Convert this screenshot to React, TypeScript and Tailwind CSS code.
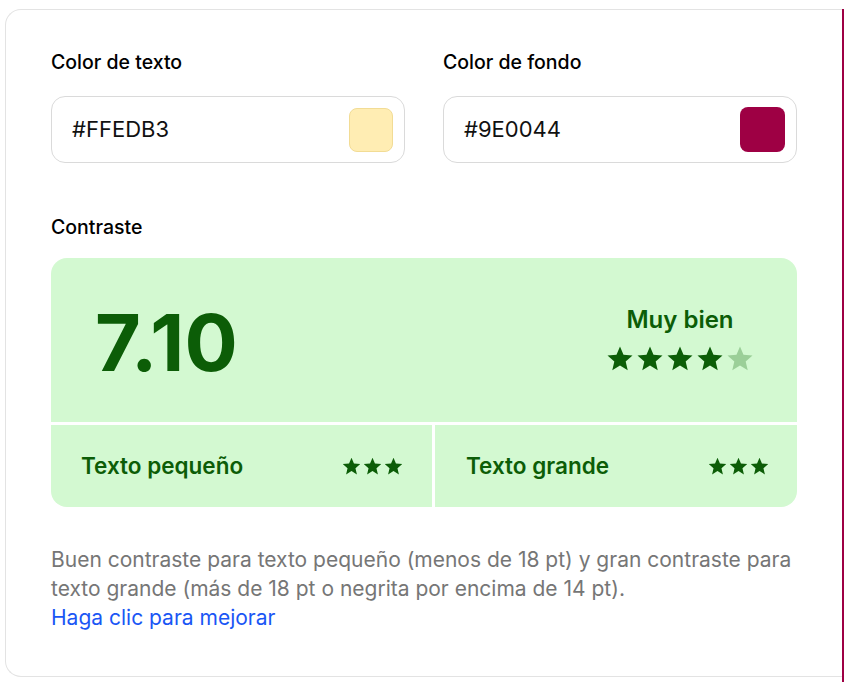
import React from "react";

const STAR = "M12 17.27L18.18 21l-1.64-7.03L22 9.24l-7.19-.61L12 2 9.19 8.63 2 9.24l5.46 4.73L5.82 21z";

function Stars({ total, filled, size }: { total: number; filled: number; size: number }) {
  return (
    <div className="flex items-center">
      {Array.from({ length: total }).map((_, i) => (
        <svg
          key={i}
          width={size}
          height={size}
          viewBox="0 0 24 24"
          className={i < filled ? "fill-[#0c5d07]" : "fill-[#9bcf98]"}
        >
          <path d={STAR} />
        </svg>
      ))}
    </div>
  );
}

function ColorField({ label, value, swatch }: { label: string; value: string; swatch: string }) {
  return (
    <div className="flex flex-col gap-5 w-[354px]">
      <span className="text-[19.5px] leading-7 font-medium text-black">{label}</span>
      <div className="h-[67px] rounded-[14px] border border-[#dadada] bg-white flex items-center justify-between pl-5 pr-[11px]">
        <span className="text-[22px] text-[#111]">{value}</span>
        <div className={swatch} />
      </div>
    </div>
  );
}

export default function App() {
  return (
    <div
      className="flex items-start h-[682px] overflow-hidden bg-white pt-[9px] pl-[5px]"
      style={{ fontFamily: "Inter, 'Noto Sans', sans-serif" }}
    >
      <div className="w-[837px] h-[668px] shrink-0 rounded-l-2xl border border-r-0 border-[#e3e3e3] pl-[45px] pr-[45px] pt-[38px]">
        <div className="flex justify-between">
          <ColorField
            label="Color de texto"
            value="#FFEDB3"
            swatch="w-[44px] h-[44px] rounded-lg bg-[#FFEDB3] border border-[#f2dc95]"
          />
          <ColorField
            label="Color de fondo"
            value="#9E0044"
            swatch="w-[45px] h-[45px] rounded-lg bg-[#9E0044]"
          />
        </div>

        <div className="mt-[50px] text-[19.5px] leading-7 font-medium text-black">Contraste</div>

        <div className="mt-[17px] rounded-2xl overflow-hidden flex flex-col gap-[3px] bg-white">
          <div className="h-[164px] bg-[#d3f9d1] flex items-center justify-between pl-[44px] pr-[42px]">
            <span className="text-[79px] font-bold text-[#0c5d07] leading-none mt-[4px]">7.10</span>
            <div className="flex flex-col items-center gap-[10px]">
              <span className="text-[24px] font-semibold text-[#0c5d07] leading-7">Muy bien</span>
              <Stars total={5} filled={4} size={30} />
            </div>
          </div>
          <div className="flex gap-[3px] h-[82px]">
            <div className="w-[381px] bg-[#d3f9d1] flex items-center justify-between pl-[30px] pr-[28px]">
              <span className="text-[22.5px] font-semibold text-[#0c5d07]">Texto pequeño</span>
              <Stars total={3} filled={3} size={21} />
            </div>
            <div className="flex-1 bg-[#d3f9d1] flex items-center justify-between pl-[31px] pr-[27px]">
              <span className="text-[22.5px] font-semibold text-[#0c5d07]">Texto grande</span>
              <Stars total={3} filled={3} size={21} />
            </div>
          </div>
        </div>

        <p className="mt-[38px] text-[21px] leading-[29px] text-[#767676]">
          Buen contraste para texto pequeño (menos de 18 pt) y gran contraste para texto grande (más de 18 pt o
          negrita por encima de 14 pt).
          <br />
          <a className="text-[#1a56f5]">Haga clic para mejorar</a>
        </p>
      </div>
      <div className="self-stretch flex-1 bg-[#9E0044]" />
    </div>
  );
}
